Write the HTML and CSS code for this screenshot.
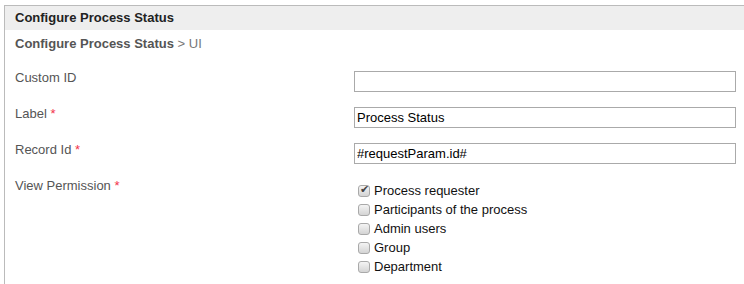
FILE: index.html
```html
<!DOCTYPE html>
<html lang="en">
<head>
    <meta charset="UTF-8">
    <meta name="viewport" content="width=device-width, initial-scale=1.0">
    <title>Configure Process Status</title>
    <link rel="stylesheet" href="styles.css">
</head>
<body>
    <div class="panel">
        <div class="panel-title">Configure Process Status</div>
        <div class="breadcrumb"><strong>Configure Process Status</strong> &gt; UI</div>

        <form class="form">
            <div class="form-row">
                <label for="customId">Custom ID</label>
                <input type="text" id="customId" value="">
            </div>
            <div class="form-row">
                <label for="label">Label <span class="required">*</span></label>
                <input type="text" id="label" value="Process Status">
            </div>
            <div class="form-row">
                <label for="recordId">Record Id <span class="required">*</span></label>
                <input type="text" id="recordId" value="#requestParam.id#">
            </div>
            <div class="form-row">
                <label>View Permission <span class="required">*</span></label>
                <!-- Permission options -->
                <div class="checkbox-list">
                    <label class="check"><input type="checkbox" checked> Process requester</label>
                    <label class="check"><input type="checkbox"> Participants of the process</label>
                    <label class="check"><input type="checkbox"> Admin users</label>
                    <label class="check"><input type="checkbox"> Group</label>
                    <label class="check"><input type="checkbox"> Department</label>
                </div>
            </div>
        </form>
    </div>
</body>
</html>
```

FILE: styles.css
```css
body {
    margin: 0;
    font-family: "Liberation Sans", Arial, sans-serif;
    font-size: 13px;
    background-color: #fff;
    color: #555;
}

.panel {
    margin: 5px 0 0 4px;
    height: 279px;
    border-top: 1px solid #bbb;
    border-left: 1px solid #bbb;
}

.panel-title {
    height: 24px;
    line-height: 24px;
    padding-left: 10px;
    background-color: #eee;
    color: #222;
    font-weight: bold;
}

.breadcrumb {
    padding: 6px 0 0 10px;
    line-height: 16px;
    color: #777;
}

.breadcrumb strong {
    color: #555;
}

.form {
    margin-top: 18px;
}

.form-row {
    display: grid;
    grid-template-columns: 339px 382px;
    padding-left: 10px;
    height: 36px;
    line-height: 16px;
}

.required {
    color: #f2334b;
}

.form-row input[type="text"] {
    box-sizing: border-box;
    height: 21px;
    margin: 1px 0 0;
    padding: 0 2px;
    border: 1px solid #aaa;
    font-family: "Liberation Sans", Arial, sans-serif;
    font-size: 13px;
    color: #000;
    outline: none;
}

.checkbox-list {
    margin-top: 3px;
    padding-left: 4px;
}

.check {
    display: flex;
    align-items: center;
    height: 19px;
    color: #111;
}

.check input {
    appearance: none;
    -webkit-appearance: none;
    position: relative;
    width: 12px;
    height: 12px;
    margin: 0 4px 0 0;
    border: 1px solid #a9a9a9;
    border-radius: 3px;
    background: linear-gradient(#f4f4f4, #d4d4d4);
}

.check input:checked::after {
    content: "\2714";
    position: absolute;
    left: 1px;
    top: -3px;
    font-size: 11px;
    color: #444;
}
```
